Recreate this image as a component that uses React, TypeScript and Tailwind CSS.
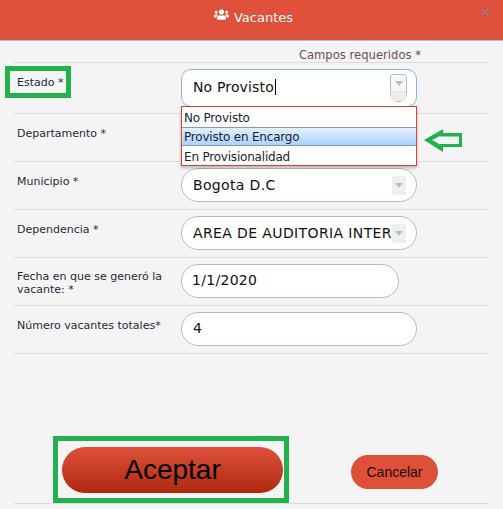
import React from "react";
import { FaUsers } from "react-icons/fa";

const dejavu = "font-['DejaVu_Sans',sans-serif]";

function Chevron() {
  return (
    <span className="flex h-[19px] w-[14px] items-center justify-center bg-[#efefef]">
      <svg width="8" height="5" viewBox="0 0 8 5"><path d="M0 0h8L4 5z" fill="#b5bccb" /></svg>
    </span>
  );
}

function Row({ label, height, labelTop = "pt-[7px]", children }: { label: React.ReactNode; height: string; labelTop?: string; children?: React.ReactNode }) {
  return (
    <div className={`flex border-b border-[#dcdcdc] pt-[6px] ${height}`}>
      <div className={`w-[167px] pl-[3px] text-[11px] leading-[13px] text-[#1d2b3a] ${labelTop}`}>{label}</div>
      {children}
    </div>
  );
}

function Field({ value, width = "w-[236px]", select = false, text = "tracking-[0.15px] pb-[1px] pl-[11px]" }: { value: string; width?: string; select?: boolean; text?: string }) {
  return (
    <div className={`flex h-[34px] ${width} items-center overflow-hidden rounded-[17px] border border-[#b4bbcb] bg-white pr-[5px] text-[14px] text-[#111] ${text}`}>
      <span className="min-w-0 flex-1 whitespace-nowrap">{value}</span>
      {select && <span className="ml-[1px] mr-[5px]"><Chevron /></span>}
    </div>
  );
}

export default function App() {
  return (
    <div className={`relative h-[509px] w-[503px] overflow-hidden bg-[#f4f4f4] ${dejavu}`}>
      <header className="relative flex h-[41px] items-center justify-center gap-[5px] border-b border-[#a9c4dc] bg-[#de5039] pb-[4px] pl-[4px] text-[13px] text-white">
        <FaUsers className="mb-[7px] h-[15px] w-[15px]" />
        <span>Vacantes</span>
        <span className="absolute right-[12px] top-[5px] text-[13px] font-bold leading-[14px] text-[#8d7f85]">×</span>
      </header>

      <main className="px-[14px]">
        <div className="flex h-[22px] items-end justify-end border-b border-[#dcdcdc] pr-[68px] text-[11.6px] leading-[14px] text-[#6b5150]">
          Campos requeridos *
        </div>

        <Row label="Estado *" height="h-[51px]">
          <div className="flex h-[38px] w-[236px] items-center rounded-[10px] border border-[#8fb0d0] bg-white pl-[11px] pr-[9px] text-[14px] tracking-[0.15px] text-[#111]">
            <span className="flex-1 pb-[3px]">No Provisto<span className="ml-[1px] inline-block h-[16px] w-px translate-y-[3px] bg-black" /></span>
            <span className="flex h-[28px] w-[17px] flex-col rounded-b-[8px] rounded-t-[3px] border border-[#a9c0d8] bg-[#f7f7f7]">
              <span className="flex h-[17px] items-center justify-center border-b border-[#e4e4e4]">
                <svg width="8" height="5" viewBox="0 0 8 5"><path d="M0 0h8L4 5z" fill="#b5bccb" /></svg>
              </span>
              <span className="flex-1 bg-[#ededed]" />
            </span>
          </div>
        </Row>
        <Row label="Departamento *" height="h-[48px]" />
        <Row label="Municipio *" height="h-[48px]">
          <Field value="Bogota D.C" select text="tracking-[0.35px] pl-[11px]" />
        </Row>
        <Row label="Dependencia *" height="h-[48px]">
          <Field value="AREA DE AUDITORIA INTER" select text="tracking-[0.38px] pl-[11px]" />
        </Row>
        <Row label={<>Fecha en que se generó la<br />vacante: *</>} height="h-[48px]" labelTop="pt-[6px]">
          <Field value="1/1/2020" width="w-[218px]" text="tracking-[0.3px] pb-[2px] pl-[10px]" />
        </Row>
        <Row label="Número vacantes totales*" height="h-[48px]">
          <Field value="4" text="pb-[2px] pl-[11px]" />
        </Row>

        <div className="flex h-[150px] items-start border-b border-[#dcdcdc] pl-[48px] pt-[93px]">
          <button className="h-[46px] w-[221px] rounded-[23px] bg-gradient-to-b from-[#dd5039] to-[#b0280e] font-['Liberation_Sans',sans-serif] text-[28px] leading-[46px] text-black">
            Aceptar
          </button>
          <button className="ml-[68px] mt-[8px] h-[34px] w-[87px] rounded-[17px] bg-[#de5039] font-['Liberation_Sans',sans-serif] text-[14px] text-[#1a0d0a]">
            Cancelar
          </button>
        </div>
      </main>

      {/* Open dropdown over the form */}
      <ul className="absolute left-[181px] top-[106px] w-[236px] border border-[#d9442c] bg-white text-[12px] leading-[19px] tracking-[-0.2px] text-[#1c2330] shadow-[0_2px_3px_rgba(0,0,0,0.25)]">
        <li className="h-[20px] pl-[2px] pt-[2px]">No Provisto</li>
        <li className="h-[19px] border-y border-[#7f9db9] bg-gradient-to-b from-[#e3f0fd] to-[#a9d2fb] pl-[2px] pt-[1px] leading-[17px]">Provisto en Encargo</li>
        <li className="h-[19px] pl-[2px] pt-[2px]">En Provisionalidad</li>
      </ul>

      {/* Green annotations */}
      <div className="absolute left-[5px] top-[66px] h-[32px] w-[66px] border-[5px] border-[#22b14c]" />
      <div className="absolute left-[53px] top-[436px] h-[67px] w-[236px] border-[5px] border-[#22b14c]" />
      <svg className="absolute left-[424px] top-[128px]" width="39" height="25" viewBox="0 0 39 25">
        <path d="M0 12 L19 1 V5 H38 V19 H19 V24 Z" fill="#22b14c" />
        <path d="M8 12 L16 8 V8.5 H35 V16 H16 V16.5 Z" fill="#f4f4f4" />
      </svg>
    </div>
  );
}
